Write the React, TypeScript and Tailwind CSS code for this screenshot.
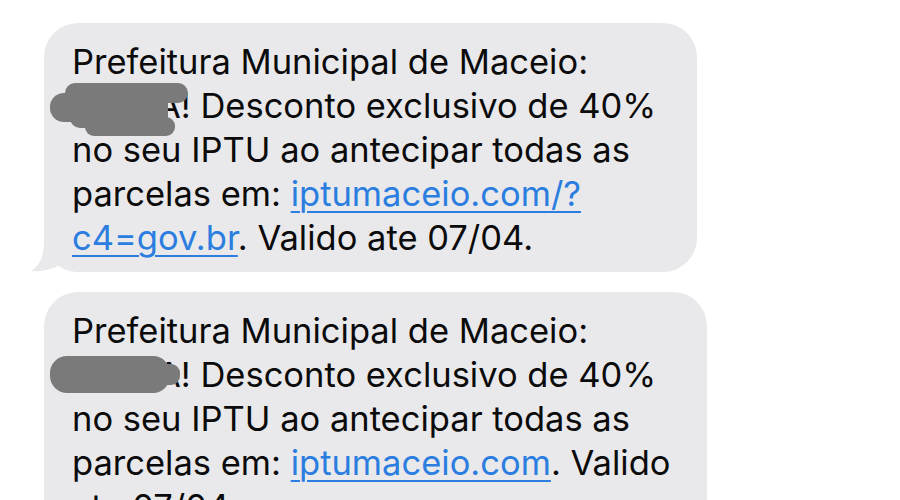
import React from 'react';

const font = { fontFamily: 'Inter, "Noto Sans", "Liberation Sans", sans-serif' };

function Link({ children }: { children: React.ReactNode }) {
  return (
    <span className="text-[#2b7de0] underline decoration-[1.5px] underline-offset-[5px]">{children}</span>
  );
}

// hidden name before "A!" — covered by the grey scribble
function Hidden() {
  return <span className="inline-block w-[85px]" />;
}

function BlobOne() {
  return (
    <svg className="absolute left-[6px] top-[59px]" width="140" height="56" viewBox="0 0 140 56">
      <g fill="#7a7a7a">
        <rect x="15" y="1" width="123" height="20" rx="10" />
        <rect x="0" y="11" width="92" height="29" rx="14" />
        <rect x="20" y="6" width="98" height="40" rx="10" />
        <rect x="35" y="35" width="90" height="19" rx="9" />
      </g>
    </svg>
  );
}

function BlobTwo() {
  return (
    <svg className="absolute left-[6px] top-[63px]" width="134" height="40" viewBox="0 0 134 40">
      <g fill="#7a7a7a">
        <rect x="0" y="1" width="120" height="37" rx="17" />
        <rect x="100" y="9" width="30" height="21" rx="9" />
      </g>
    </svg>
  );
}

export default function App() {
  return (
    <div className="w-[900px] h-[500px] overflow-hidden bg-white pl-[44px] pt-[23px]" style={font}>
      {/* first message */}
      <div className="relative w-[653px] rounded-[34px] bg-[#e9e9eb] pl-[28px] pr-4 pt-[17px] pb-[12px] text-[34.5px] leading-[44px] text-[#0b0b0b]">
        <div>Prefeitura Municipal de Maceio:</div>
        <div className="whitespace-nowrap"><Hidden />A! Desconto exclusivo de 40%</div>
        <div>no seu IPTU ao antecipar todas as</div>
        <div>parcelas em: <Link>iptumaceio.com/?</Link></div>
        <div><Link>c4=gov.br</Link>. Valido ate 07/04.</div>
        <BlobOne />
        <svg className="absolute left-[-14px] bottom-0" width="32" height="32" viewBox="0 0 32 32">
          <path d="M14 0 C14 14 11 25 1 31 C10 32 20 30 28 26 L32 26 L32 0 Z" fill="#e9e9eb" />
        </svg>
      </div>

      {/* second message */}
      <div className="relative mt-[20px] w-[663px] rounded-[34px] bg-[#e9e9eb] pl-[28px] pr-4 pt-[17px] pb-[12px] text-[34.5px] leading-[44px] text-[#0b0b0b]">
        <div>Prefeitura Municipal de Maceio:</div>
        <div className="whitespace-nowrap"><Hidden />A! Desconto exclusivo de 40%</div>
        <div>no seu IPTU ao antecipar todas as</div>
        <div className="whitespace-nowrap">parcelas em: <Link>iptumaceio.com</Link>. Valido</div>
        <div>ate 07/04.</div>
        <BlobTwo />
      </div>
    </div>
  );
}
